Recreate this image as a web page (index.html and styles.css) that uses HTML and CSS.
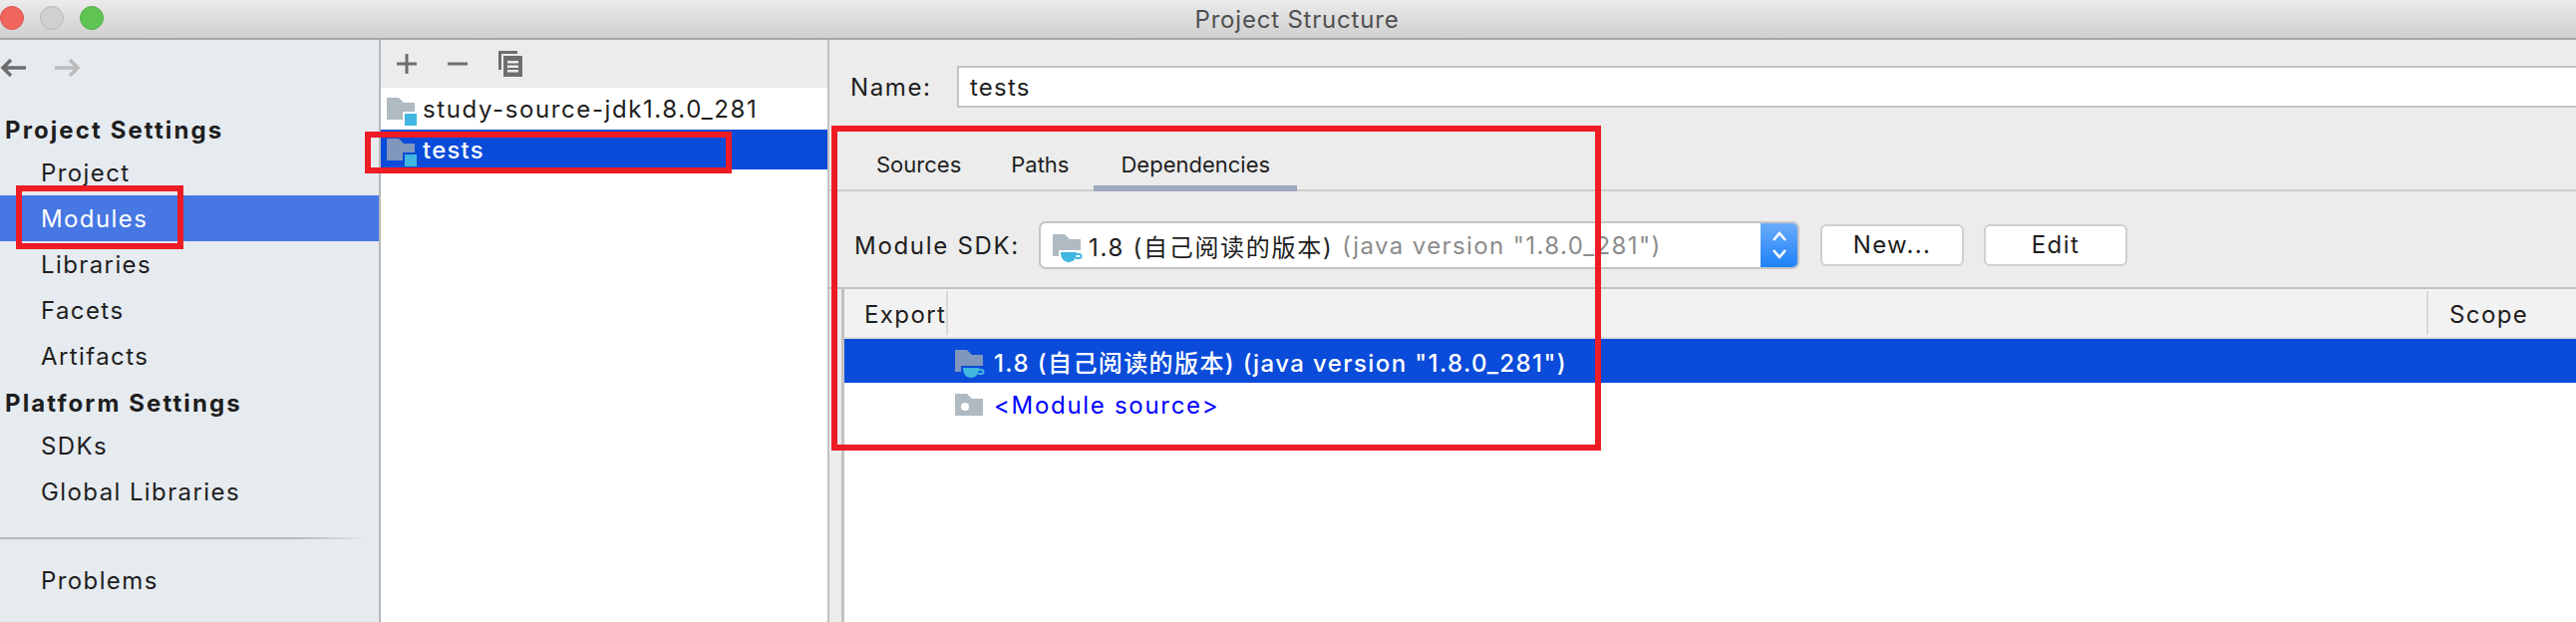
FILE: index.html
```html
<!DOCTYPE html>
<html>
<head>
  <title>Project Structure</title>
  <link rel="stylesheet" href="styles.css">
</head>
<body>

  <div class="titlebar">
    <div class="lights">
      <span class="light red"></span>
      <span class="light gray"></span>
      <span class="light green"></span>
    </div>
    <div class="title">Project Structure</div>
  </div>

  <div class="main">

    <div class="sidebar">
      <div class="nav-arrows">
        <svg width="27" height="20" viewBox="0 0 27 20"><path d="M11 2 3 10l8 8M3 10h23" class="arrow-back"/></svg>
        <svg width="27" height="20" viewBox="0 0 27 20"><path d="M16 2l8 8-8 8M24 10H1" class="arrow-fwd"/></svg>
      </div>
      <div class="side-head first">Project Settings</div>
      <div class="side-item">Project</div>
      <div class="side-item active">Modules</div>
      <div class="side-item">Libraries</div>
      <div class="side-item">Facets</div>
      <div class="side-item">Artifacts</div>
      <div class="side-head">Platform Settings</div>
      <div class="side-item">SDKs</div>
      <div class="side-item">Global Libraries</div>
      <div class="side-sep"></div>
      <div class="side-item">Problems</div>
    </div>

    <div class="modules">
      <div class="toolbar">
        <svg width="20" height="20" viewBox="0 0 20 20"><path d="M0 8.500h20v3H0zM8.500 0h3v20h-3z" class="tool"/></svg>
        <svg width="20" height="20" viewBox="0 0 20 20"><path d="M0 8.500h20v3H0z" class="tool"/></svg>
        <svg width="24" height="26" viewBox="0 0 24 26"><path d="M0 0h19v3H3v16H0zM5 5h19v21H5zM9 10v2.500h11V10zM9 14.500V17h11v-2.500zM9 19v2.500h11V19z" class="tool" fill-rule="evenodd"/></svg>
      </div>
      <div class="mod-row">
        <svg class="mod-icon" width="30" height="28" viewBox="0 0 30 28"><path d="M0 0h12l5 5h11v9H16v8H0z" class="folder"/><path d="M18 16h12v12H18z" class="badge"/></svg>
        <span>study-source-jdk1.8.0_281</span>
      </div>
      <div class="mod-row selected">
        <svg class="mod-icon" width="30" height="28" viewBox="0 0 30 28"><path d="M0 0h12l5 5h11v9H16v8H0z" class="folder-sel"/><path d="M18 16h12v12H18z" class="badge"/></svg>
        <span>tests</span>
      </div>
    </div>

    <div class="detail">
      <div class="name-row">
        <label class="name-label">Name:</label>
        <div class="name-input">tests</div>
      </div>

      <div class="tabs">
        <div class="tab">Sources</div>
        <div class="tab">Paths</div>
        <div class="tab current">Dependencies</div>
      </div>

      <div class="sdk-row">
        <span class="sdk-label">Module SDK:</span>
        <div class="combo">
          <svg class="java-icon" width="30" height="28" viewBox="0 0 30 28"><path d="M0 0h12l5 5h11v11H6v6H0z" class="folder"/><path d="M8 18h16c0 6-3 10-8 10s-8-4-8-10z" class="badge"/><path d="M24 20h2.500a2 2 0 0 1 0 4H23" class="cup-handle"/></svg>
          <span class="combo-text">1.8 (自己阅读的版本)</span>
          <span class="combo-hint">(java version "1.8.0_281")</span>
          <div class="combo-arrow">
            <svg width="16" height="30" viewBox="0 0 16 30"><path d="M2 10l6-7 6 7M2 20l6 7 6-7" class="chevrons"/></svg>
          </div>
        </div>
        <div class="btn new-btn">New...</div>
        <div class="btn">Edit</div>
      </div>

      <div class="table-wrap">
        <div class="table-head">
          <div class="col-export">Export</div>
          <div class="col-name"></div>
          <div class="col-scope">Scope</div>
        </div>
        <div class="dep-row selected">
          <svg class="java-icon" width="30" height="28" viewBox="0 0 30 28"><path d="M0 0h12l5 5h11v11H6v6H0z" class="folder-sel"/><path d="M8 18h16c0 6-3 10-8 10s-8-4-8-10z" class="badge"/><path d="M24 20h2.500a2 2 0 0 1 0 4H23" class="cup-handle"/></svg>
          <span>1.8 (自己阅读的版本) (java version "1.8.0_281")</span>
        </div>
        <div class="dep-row source">
          <svg class="java-icon" width="30" height="28" viewBox="0 0 30 28"><path d="M0 0h12l5 5h11v17H0z" class="folder"/><circle cx="10" cy="13" r="4" fill="#fff"/></svg>
          <span>&lt;Module source&gt;</span>
        </div>
      </div>
    </div>

  </div>

  <!-- red annotation boxes drawn over the screenshot -->
  <div class="mark mark-modules"></div>
  <div class="mark mark-tests"></div>
  <div class="mark mark-panel"></div>

</body>
</html>
```

FILE: styles.css
```css
html, body {
  margin: 0;
  height: 624px;
  overflow: hidden;
}
body {
  position: relative;
  font-family: Inter, "Noto Sans CJK SC", sans-serif;
  font-size: 24px;
  letter-spacing: 1.4px;
  color: #1e1e1e;
  background: #ececec;
  display: flex;
  flex-direction: column;
}
svg {
  display: block;
  flex: none;
}

/* title bar */
.titlebar {
  height: 38px;
  flex: none;
  padding-left: 18px;
  display: flex;
  align-items: center;
  justify-content: center;
  position: relative;
  background: linear-gradient(#ebebeb, #cfcfcf);
  border-bottom: 2px solid #a8a8a8;
}
.title {
  font-size: 24px;
  letter-spacing: 0.8px;
  color: #505050;
}
.lights {
  position: absolute;
  left: 0;
  top: 6px;
  display: flex;
  gap: 16px;
}
.light {
  width: 24px;
  height: 24px;
  border-radius: 50%;
  box-sizing: border-box;
}
.red {
  background: #f0655c;
  border: 1px solid #e0534b;
}
.gray {
  background: #d0d0d0;
  border: 1px solid #b9b9b9;
}
.green {
  background: #5fc454;
  border: 1px solid #50b245;
}

.main {
  flex: 1;
  display: flex;
  min-height: 0;
}

/* left nav */
.sidebar {
  width: 380px;
  flex: none;
  background: #e6ebf0;
  border-right: 2px solid #b5b7b9;
}
.nav-arrows {
  height: 22px;
  padding-top: 18px;
  display: flex;
  gap: 27px;
}
.arrow-back {
  fill: none;
  stroke: #6e6e6e;
  stroke-width: 3.500;
}
.arrow-fwd {
  fill: none;
  stroke: #bcbcbc;
  stroke-width: 3.500;
}
.side-head {
  height: 44px;
  line-height: 50px;
  padding-left: 5px;
  font-weight: 700;
  letter-spacing: 2.1px;
}
.side-head.first {
  height: 42px;
  line-height: 46px;
  margin-top: 28px;
}
.side-item {
  height: 46px;
  line-height: 48px;
  padding-left: 41px;
}
.side-item.active {
  background: #4677e3;
  color: #fff;
}
.side-sep {
  height: 2px;
  margin: 23px 10px 18px 0;
  background: linear-gradient(to right, #b5b7b9 80%, #e6ebf0);
}

/* module list */
.modules {
  width: 448px;
  flex: none;
  background: #fff;
  border-right: 2px solid #c2c2c2;
}
.toolbar {
  height: 48px;
  background: #ececec;
  padding-left: 16px;
  display: flex;
  align-items: center;
  gap: 31px;
}
.tool {
  fill: #6e6e6e;
}
.mod-row {
  height: 42px;
  padding-left: 6px;
  padding-top: 1px;
  box-sizing: border-box;
  display: flex;
  align-items: center;
  gap: 6px;
  letter-spacing: 1.6px;
}
.mod-row.selected {
  height: 40px;
  background: #0a4bd9;
  color: #fff;
  font-weight: 500;
  letter-spacing: 1.2px;
}
.mod-icon {
  margin-top: 5px;
}
.folder {
  fill: #afbac1;
}
.folder-sel {
  fill: #7f96bd;
}
.badge {
  fill: #40b6e0;
}
.cup-handle {
  fill: none;
  stroke: #40b6e0;
  stroke-width: 2;
}

/* right side */
.detail {
  flex: 1;
  min-width: 0;
  display: flex;
  flex-direction: column;
}
.name-row {
  height: 42px;
  margin-top: 26px;
  display: flex;
  align-items: center;
  flex: none;
}
.name-label {
  width: 128px;
  padding-left: 21px;
  box-sizing: border-box;
  letter-spacing: 1.6px;
}
.name-input {
  flex: 1;
  height: 42px;
  line-height: 39px;
  box-sizing: border-box;
  background: #fff;
  border: 2px solid #c4c4c4;
  border-right: 0;
  padding-left: 11px;
  letter-spacing: 1.2px;
}
.tabs {
  height: 46px;
  margin-top: 36px;
  flex: none;
  display: flex;
  padding-left: 22px;
  border-bottom: 2px solid #cdcdcd;
}
.tab {
  padding: 0 25px;
  line-height: 42px;
  height: 46px;
  font-size: 22px;
  letter-spacing: 0;
}
.tab.current {
  padding: 0 27px;
  box-sizing: border-box;
  height: 48px;
  border-bottom: 6px solid #9ca8bb;
}
.sdk-row {
  height: 98px;
  flex: none;
  display: flex;
  align-items: center;
  padding-left: 25px;
  box-sizing: border-box;
  padding-top: 12px;
  border-bottom: 2px solid #c2c2c2;
}
.sdk-label {
  width: 185px;
  flex: none;
  letter-spacing: 1.7px;
}
.combo {
  width: 763px;
  height: 48px;
  box-sizing: border-box;
  flex: none;
  display: flex;
  align-items: center;
  background: #fff;
  border: 2px solid #c4c4c4;
  border-radius: 7px;
  padding-left: 12px;
  overflow: hidden;
}
.combo .java-icon {
  margin-top: 6px;
}
.combo-text {
  margin-left: 6px;
  letter-spacing: 1.7px;
}
.combo-hint {
  margin-left: 9px;
  color: #8c8c8c;
}
.combo-arrow {
  margin-left: auto;
  width: 37px;
  height: 48px;
  background: linear-gradient(#6eaefb, #1a80fa);
  display: flex;
  align-items: center;
  justify-content: center;
}
.chevrons {
  fill: none;
  stroke: #fff;
  stroke-width: 2.500;
}
.btn {
  width: 144px;
  height: 42px;
  line-height: 38px;
  box-sizing: border-box;
  flex: none;
  margin-left: 20px;
  text-align: center;
  background: #fff;
  border: 2px solid #cfcfcf;
  border-radius: 6px;
}
.new-btn {
  margin-left: 21px;
}

/* dependency table */
.table-wrap {
  flex: 1;
  margin-left: 12px;
  background: #fff;
  border-left: 3px solid #c2c2c2;
}
.table-head {
  height: 48px;
  display: flex;
  align-items: center;
  background: #f2f2f2;
  border-bottom: 2px solid #dcdcdc;
}
.col-export {
  width: 104px;
  height: 44px;
  padding-left: 20px;
  box-sizing: border-box;
  line-height: 48px;
  border-right: 2px solid #d8d8d8;
}
.col-name {
  width: 1485px;
  height: 44px;
  box-sizing: border-box;
  border-right: 2px solid #d8d8d8;
  flex: none;
}
.col-scope {
  padding-left: 21px;
  height: 44px;
  line-height: 48px;
}
.dep-row {
  height: 44px;
  padding-left: 111px;
  display: flex;
  align-items: center;
  gap: 9px;
}
.dep-row .java-icon {
  margin-top: 6px;
}
.dep-row.selected {
  background: #0a4bd9;
  color: #fff;
  font-weight: 500;
}
.dep-row.source {
  color: #0000ff;
  letter-spacing: 1.7px;
}

/* red annotation boxes */
.mark {
  position: absolute;
  box-sizing: border-box;
  border: 6px solid #ee1c25;
}
.mark-modules {
  left: 16px;
  top: 186px;
  width: 168px;
  height: 64px;
}
.mark-tests {
  left: 366px;
  top: 132px;
  width: 368px;
  height: 42px;
}
.mark-panel {
  left: 834px;
  top: 126px;
  width: 772px;
  height: 326px;
}
```
